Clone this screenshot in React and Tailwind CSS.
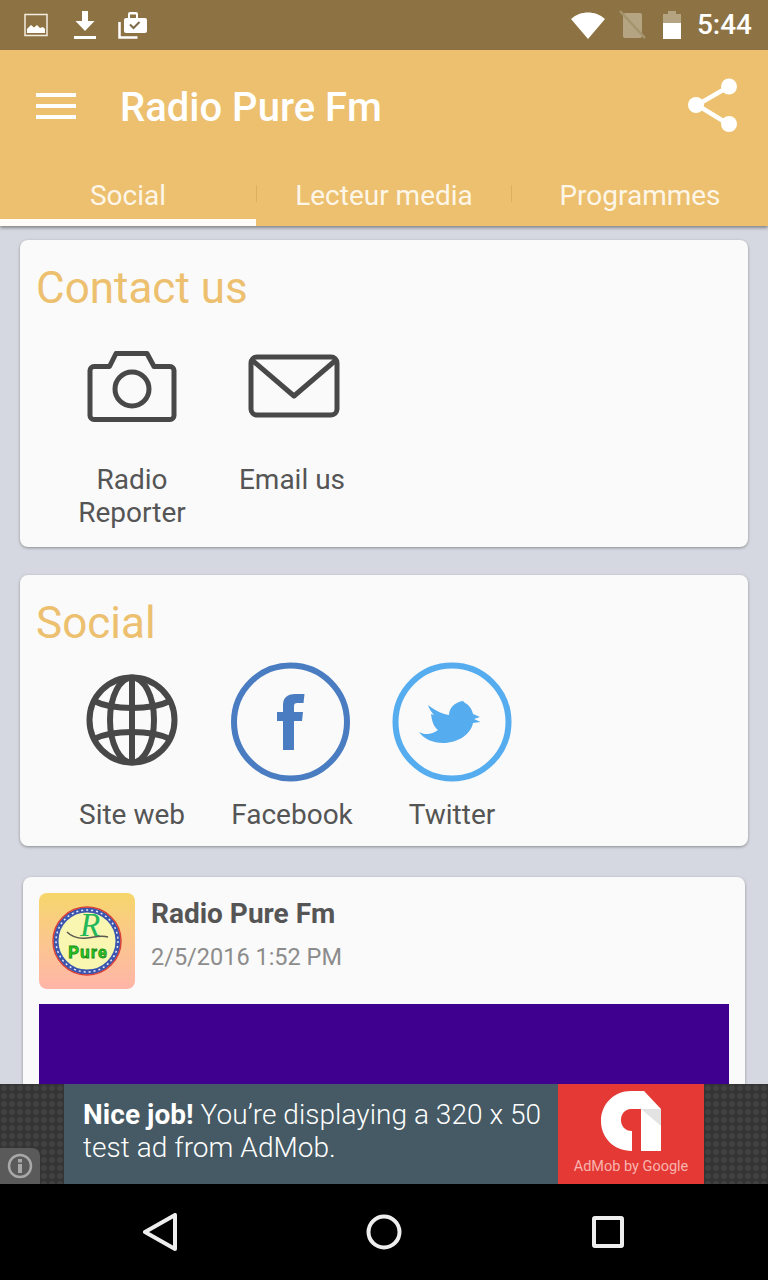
import React from 'react';

const StatusIcons = () => (
    <div className="flex h-[50px] shrink-0 items-center bg-[#8d7343] pl-6 pr-4 text-white">
        <svg width="24" height="24" viewBox="0 0 24 24" className="mr-[25px]">
            <rect x="1" y="1.500" width="22" height="21" fill="none" stroke="#f3ede0" strokeWidth="1.500" />
            <path d="M3 20v-4l4-4 3 2.500 3-2.500 3 3 3-1 2 2v4z" fill="#fff" />
        </svg>
        <svg width="24" height="32" viewBox="0 0 24 32" className="mr-[21px]">
            <path d="M8.500 2h6v10h6.500l-9.500 10-9.500-10h6.500z" fill="#fff" transform="translate(0.500 0)" />
            <rect x="1" y="27" width="22" height="3" fill="#fff" />
        </svg>
        <svg width="30" height="30" viewBox="0 0 30 30">
            <path d="M9 8h18a2 2 0 0 1 2 2v11a2 2 0 0 1-2 2H8a2 2 0 0 1-2-2V10a2 2 0 0 1 2-2h2V4a2 2 0 0 1 2-2h6a2 2 0 0 1 2 2v4h-2V4.500h-6V8z" fill="#fff" />
            <path d="M12 14.500l3.500 3.500 6-6" fill="none" stroke="#7d6a48" strokeWidth="2" />
            <path d="M1.500 12v15.500h18" fill="none" stroke="#fff" strokeWidth="2.500" />
        </svg>
        <div className="ml-auto flex items-center">
            <svg width="36" height="30" viewBox="0 0 36 30" className="mr-[13px]">
                <path d="M1 9C6 4.500 12 2.500 18 2.500S30 4.500 35 9L18 29z" fill="#fff" />
            </svg>
            <svg width="28" height="30" viewBox="0 0 28 30" className="mr-[15px]">
                <path d="M6 3h15a2 2 0 0 1 2 2v21a2 2 0 0 1-2 2H6a2 2 0 0 1-2-2V5a2 2 0 0 1 2-2z" fill="#b5a482" />
                <path d="M1 1l25 27" stroke="#a6946f" strokeWidth="2.500" />
            </svg>
            <svg width="20" height="30" viewBox="0 0 20 30" className="mr-[15px]">
                <path d="M6 1h8v3h5v9H1V4h5z" fill="#b5a482" />
                <rect x="1" y="13" width="18" height="16" fill="#fff" />
            </svg>
            <span className="text-[28px] font-medium leading-none">5:44</span>
        </div>
    </div>
);

const Header = () => (
    <div className="relative z-10 shrink-0 bg-[#ecc06e] shadow-[0_2px_3px_rgba(70,70,70,0.55)]">
        <div className="flex h-[116px] items-center text-white">
            <div className="mb-[4px] ml-9 flex w-10 flex-col gap-[7px]">
                <div className="h-[4px] bg-white" />
                <div className="h-[4px] bg-white" />
                <div className="h-[4px] bg-white" />
            </div>
            <h1 className="ml-[44px] text-[40px] font-medium leading-none">Radio Pure Fm</h1>
            <svg width="50" height="54" viewBox="0 0 50 54" className="mb-[6px] ml-auto mr-[30px]">
                <path d="M41 8.500L9 27l32 19.500" fill="none" stroke="#fff" strokeWidth="4.500" />
                <circle cx="41" cy="8.500" r="8" fill="#fff" />
                <circle cx="8" cy="27" r="8" fill="#fff" />
                <circle cx="41" cy="46" r="8" fill="#fff" />
            </svg>
        </div>
        <div className="grid h-[60px] grid-cols-3 text-[28px] text-[#fdf6e8]">
            <div className="flex items-start justify-center border-b-[7px] border-[#fffdf6] pt-[12px] leading-[36px]">Social</div>
            <div className="relative flex items-start justify-center pt-[12px] leading-[36px]">
                <span>Lecteur media</span>
                <div className="absolute left-0 top-[19px] h-[17px] w-[1px] bg-[#dcb060]" />
                <div className="absolute right-0 top-[19px] h-[17px] w-[1px] bg-[#dcb060]" />
            </div>
            <div className="flex items-start justify-center pt-[12px] leading-[36px]">Programmes</div>
        </div>
    </div>
);

const CameraIcon = () => (
    <svg width="90" height="74" viewBox="0 0 90 74" fill="none" stroke="#484848" strokeWidth="5" strokeLinejoin="round">
        <path d="M7 16.500h15.500L29 3.500h31l7 13h16a4 4 0 0 1 4 4v45a4 4 0 0 1-4 4H7a4 4 0 0 1-4-4v-45a4 4 0 0 1 4-4z" />
        <circle cx="45" cy="39" r="17" />
    </svg>
);

const MailIcon = () => (
    <svg width="92" height="64" viewBox="0 0 92 64" fill="none" stroke="#484848" strokeWidth="5" strokeLinejoin="round">
        <rect x="3" y="3" width="86" height="58" rx="6" />
        <path d="M4 6l42 36 42-36" />
    </svg>
);

const GlobeIcon = () => (
    <svg width="92" height="92" viewBox="0 0 92 92" fill="none" stroke="#484848" strokeWidth="6">
        <circle cx="46" cy="46" r="42.500" />
        <ellipse cx="46" cy="46" rx="22" ry="42.500" />
        <path d="M46 3v86" />
        <path d="M8 27c10 5 24 7 38 7s28-2 38-7M8 65c10-5 24-7 38-7s28 2 38 7" />
    </svg>
);

const FacebookIcon = () => (
    <svg width="120" height="120" viewBox="0 0 120 120">
        <circle cx="59.500" cy="60" r="56.500" fill="none" stroke="#4a7cc1" strokeWidth="6" />
        <path d="M52 88V59h-6v-9h6v-7c0-7 4-11 12-11h9.500l-1 9H66c-2 0-3 1-3 3v6h9l-1 9h-8v29z" fill="#4a7cc1" />
    </svg>
);

const TwitterIcon = () => (
    <svg width="120" height="120" viewBox="0 0 120 120">
        <circle cx="60" cy="60" r="56.500" fill="none" stroke="#55acee" strokeWidth="6" />
        <path d="M27 70C32 73 40 73 46 68C42 65 40 60 39 52L42 53C39 50 37 46 36 43C42 48 50 52 57 53C57 46 63 40 71 39L73 41C77 43 80 47 81 52L88 55L82 57L88.500 60L81 61C79 72 66 81 51 81C41 81 32 77 27 70z" fill="#55acee" />
    </svg>
);

const ShortcutLabel = ({ children }) => (
    <span className="text-center text-[28px] leading-[33px] text-[#555555]">{children}</span>
);

const StationLogo = () => (
    <div className="flex h-[96px] w-[96px] shrink-0 items-center justify-center rounded-[8px] bg-gradient-to-b from-[#f6d66a] to-[#ffb5a8]">
        <svg width="70" height="70" viewBox="0 0 70 70">
            <circle cx="35" cy="35" r="31" fill="#f8f6b0" stroke="#3a55ad" strokeWidth="5" />
            <circle cx="35" cy="35" r="31" fill="none" stroke="#e8e8f8" strokeWidth="1.500" strokeDasharray="2 3" />
            <circle cx="35" cy="35" r="34" fill="none" stroke="#d8403a" strokeWidth="1.500" />
            <text x="38" y="30" textAnchor="middle" fontFamily="'Liberation Serif', serif" fontStyle="italic" fontSize="33" fill="#22b85a">R</text>
            <path d="M15 26c5 5 12 7 20 6s14-3 21-1" fill="none" stroke="#5a5a50" strokeWidth="1.500" />
            <text x="36" y="52" textAnchor="middle" fontFamily="'Liberation Sans', sans-serif" fontWeight="700" fontSize="16" letterSpacing="1" fill="#22d022" stroke="#1a8a1a" strokeWidth="0.800">Pure</text>
        </svg>
    </div>
);

const AdBanner = () => (
    <div className="relative flex h-[100px] shrink-0 justify-center bg-[#343434] bg-[radial-gradient(circle,#424242_35%,transparent_65%)] bg-[length:8px_8px]">
        <div className="flex w-[640px]">
            <div className="flex flex-1 items-center bg-[#455a64] pb-[6px] pl-[19px] text-[28px] font-light leading-[33px] tracking-[0.05px] text-white">
                <p>
                    <span className="font-bold">Nice job!</span> You’re displaying a 320 x 50<br />test ad from AdMob.
                </p>
            </div>
            <div className="flex w-[146px] flex-col items-center bg-[#e53935] pt-[7px]">
                <svg width="60" height="60" viewBox="0 0 60 60">
                    <path d="M30 0h13l17 18v42H40V18H30C24 18 20 23 20 29C20 35 24 40 31 40V60C12 60 0 46 0 30C0 13 13 0 30 0z" fill="#fff" />
                    <path d="M40 18h20v17z" fill="#e3e3e3" />
                </svg>
                <span className="mt-[6px] whitespace-nowrap text-[14.500px] leading-[20px] text-[#f8b4ae]">AdMob by Google</span>
            </div>
        </div>
        <div className="absolute bottom-0 left-0 flex h-[36px] w-[40px] items-center justify-center rounded-tr-[8px] bg-[#5a5a5a]">
            <svg width="26" height="26" viewBox="0 0 26 26" fill="none">
                <circle cx="13" cy="13" r="11" stroke="#a8a8a8" strokeWidth="2.500" />
                <rect x="11" y="11" width="4" height="9" fill="#a8a8a8" />
                <rect x="11" y="6" width="4" height="3.500" fill="#a8a8a8" />
            </svg>
        </div>
    </div>
);

const NavBar = () => (
    <div className="flex h-[96px] shrink-0 items-center bg-black pb-[1px] pl-[143px] pr-[144px]">
        <svg width="34" height="38" viewBox="0 0 34 38" fill="none" stroke="#eeeeee" strokeWidth="4" strokeLinejoin="round">
            <path d="M32 2v34L2 19z" />
        </svg>
        <svg width="36" height="36" viewBox="0 0 36 36" fill="none" stroke="#eeeeee" strokeWidth="4" className="ml-[189px]">
            <circle cx="18" cy="18" r="15.500" />
        </svg>
        <svg width="32" height="32" viewBox="0 0 32 32" fill="none" stroke="#eeeeee" strokeWidth="4" strokeLinejoin="round" className="ml-auto">
            <rect x="2" y="2" width="28" height="28" rx="1" />
        </svg>
    </div>
);

const App = () => {
    return (
        <div className="flex h-[1280px] w-[768px] flex-col overflow-hidden bg-[#d5d8e0] font-['Roboto',sans-serif]">
            <StatusIcons />
            <Header />

            <div className="min-h-0 flex-1 overflow-hidden px-5 pt-[14px]">
                <section className="h-[307px] rounded-[8px] bg-[#fafafa] pt-[23px] shadow-[0_1px_3px_rgba(0,0,0,0.35)]">
                    <h2 className="pl-[16px] text-[44px] leading-[50px] text-[#ecc06e]">Contact us</h2>
                    <div className="mt-[37px] flex pl-[32px]">
                        <div className="flex w-[160px] flex-col items-center">
                            <div className="h-[74px]"><CameraIcon /></div>
                            <div className="mt-[39px] flex flex-col items-center"><ShortcutLabel>Radio</ShortcutLabel><ShortcutLabel>Reporter</ShortcutLabel></div>
                        </div>
                        <div className="flex w-[160px] flex-col items-center">
                            <div className="h-[74px] translate-x-[2px] pt-[4px]"><MailIcon /></div>
                            <div className="mt-[39px]"><ShortcutLabel>Email us</ShortcutLabel></div>
                        </div>
                    </div>
                </section>

                <section className="mt-[28px] h-[271px] rounded-[8px] bg-[#fafafa] pt-[23px] shadow-[0_1px_3px_rgba(0,0,0,0.35)]">
                    <h2 className="pl-[16px] text-[44px] leading-[50px] text-[#ecc06e]">Social</h2>
                    <div className="mt-[14px] flex pl-[32px]">
                        <div className="flex w-[160px] flex-col items-center">
                            <div className="flex h-[120px] items-center pb-[4px]"><GlobeIcon /></div>
                            <div className="mt-[16px]"><ShortcutLabel>Site web</ShortcutLabel></div>
                        </div>
                        <div className="flex w-[160px] flex-col items-center">
                            <div className="-translate-x-[1px]"><FacebookIcon /></div>
                            <div className="mt-[16px]"><ShortcutLabel>Facebook</ShortcutLabel></div>
                        </div>
                        <div className="flex w-[160px] flex-col items-center">
                            <TwitterIcon />
                            <div className="mt-[16px]"><ShortcutLabel>Twitter</ShortcutLabel></div>
                        </div>
                    </div>
                </section>

                <section className="mx-[3px] mt-[31px] h-[300px] rounded-[8px] bg-[#fafafa] px-4 pt-4 shadow-[0_1px_3px_rgba(0,0,0,0.35)]">
                    <div className="flex">
                        <StationLogo />
                        <div className="ml-4">
                            <p className="pt-[1px] text-[28px] font-bold leading-[40px] text-[#555555]">Radio Pure Fm</p>
                            <p className="mt-[5px] text-[23.500px] leading-[36px] text-[#8c8c8c]">2/5/2016 1:52 PM</p>
                        </div>
                    </div>
                    <div className="mt-[15px] h-[200px] bg-[#3f0090]" />
                </section>
            </div>

            <AdBanner />
            <NavBar />
        </div>
    );
};

export default App;
